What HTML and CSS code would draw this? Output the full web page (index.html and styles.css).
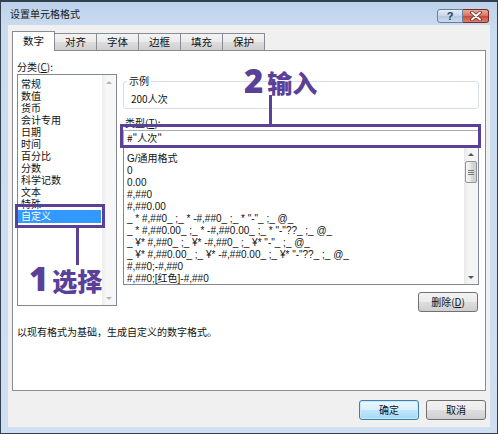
FILE: index.html
```html
<!DOCTYPE html>
<html lang="zh-CN">
<head>
<meta charset="utf-8">
<title>设置单元格格式</title>
<link rel="stylesheet" href="styles.css">
</head>
<body>
<div class="window">
  <div class="titlebar">
    <span class="title">设置单元格格式</span>
    <div class="caption">
      <span class="cap-btn help">?</span>
      <span class="cap-btn close"><svg width="12" height="10" viewBox="0 0 12 10"><path d="M2 1.5 L10 8.5 M10 1.5 L2 8.5" stroke="#6b2a22" stroke-width="3.6" stroke-linecap="round"/><path d="M2 1.5 L10 8.5 M10 1.5 L2 8.5" stroke="#fff" stroke-width="2" stroke-linecap="round"/></svg></span>
    </div>
  </div>
  <div class="client">
    <div class="tabs">
      <span class="tab active">数字</span>
      <span class="tab">对齐</span>
      <span class="tab">字体</span>
      <span class="tab">边框</span>
      <span class="tab">填充</span>
      <span class="tab">保护</span>
    </div>
    <div class="panel">
      <div class="panel-grid">
        <div class="cat-label">分类(<u>C</u>):</div>
        <div class="listbox cat-list">
          <ul class="items">
            <li>常规</li>
            <li>数值</li>
            <li>货币</li>
            <li>会计专用</li>
            <li>日期</li>
            <li>时间</li>
            <li>百分比</li>
            <li>分数</li>
            <li>科学记数</li>
            <li>文本</li>
            <li>特殊</li>
            <li class="selected">自定义</li>
          </ul>
          <div class="vscroll disabled">
            <span class="arrow up"></span>
            <span class="track"></span>
            <span class="arrow down"></span>
          </div>
        </div>
        <div class="right-col">
          <div class="sample">
            <div class="sample-legend">示例</div>
            <div class="sample-value">200人次</div>
          </div>
          <div class="type-label">类型(<u>T</u>):</div>
          <div class="type-input">#"人次"</div>
          <div class="listbox fmt-list">
            <ul class="items">
              <li>G/通用格式</li>
              <li>0</li>
              <li>0.00</li>
              <li>#,##0</li>
              <li>#,##0.00</li>
              <li>_ * #,##0_ ;_ * -#,##0_ ;_ * "-"_ ;_ @_</li>
              <li>_ * #,##0.00_ ;_ * -#,##0.00_ ;_ * "-"??_ ;_ @_</li>
              <li>_ ¥* #,##0_ ;_ ¥* -#,##0_ ;_ ¥* "-"_ ;_ @_</li>
              <li>_ ¥* #,##0.00_ ;_ ¥* -#,##0.00_ ;_ ¥* "-"??_ ;_ @_</li>
              <li>#,##0;-#,##0</li>
              <li>#,##0;[红色]-#,##0</li>
            </ul>
            <div class="vscroll">
              <span class="arrow up"></span>
              <span class="track"><span class="thumb"><span class="grip"></span></span></span>
              <span class="arrow down"></span>
            </div>
          </div>
          <div class="del-row"><button class="btn">删除(<u>D</u>)</button></div>
        </div>
      </div>
      <p class="desc">以现有格式为基础，生成自定义的数字格式。</p>
    </div>
    <div class="footer">
      <button class="btn default">确定</button>
      <button class="btn">取消</button>
    </div>
  </div>

  <div class="anno box1"></div>
  <div class="anno line1"></div>
  <div class="anno label1"><span class="num">1</span>选择</div>
  <div class="anno box2"></div>
  <div class="anno line2"></div>
  <div class="anno label2"><span class="num">2</span>输入</div>
</div>
</body>
</html>
```

FILE: styles.css
```css
* { box-sizing: border-box; }
html, body { margin: 0; padding: 0; }
body {
  width: 498px;
  height: 434px;
  overflow: hidden;
  background: #fff;
  font-family: "Noto Sans CJK SC", "Noto Sans", sans-serif;
  font-size: 10px;
  color: #111;
}
u { text-decoration: underline; }

.window {
  position: relative;
  width: 498px;
  height: 434px;
  border: 1px solid #33404f;
  border-top-width: 2px;
  background: linear-gradient(to bottom, #bcd1ea 0, #c9dbef 24px, #cfdff1 100%);
  padding: 0 7px 6px 7px;
  display: flex;
  flex-direction: column;
}

.titlebar {
  height: 23px;
  display: flex;
  align-items: center;
  justify-content: space-between;
  padding: 0 0 0 2px;
}
.title { font-size: 10px; line-height: 12px; color: #1a1a1a; margin-top: 1px; }
.caption { display: flex; align-self: flex-start; margin-top: 7px; margin-right: 1px; }
.cap-btn {
  width: 26px;
  height: 14px;
  display: flex;
  align-items: center;
  justify-content: center;
  border: 1px solid #6c7f98;
}
.cap-btn.help {
  background: linear-gradient(to bottom, #e6eef8, #c5d5ea 50%, #b5c8e2 51%, #cbdaee);
  border-radius: 3px 0 0 3px;
  font-family: "Liberation Sans", sans-serif;
  font-weight: bold;
  font-size: 11px;
  color: #2a3b55;
  line-height: 12px;
}
.cap-btn.close {
  background: linear-gradient(to bottom, #eaa99c, #d9705e 50%, #c7493a 51%, #d98070);
  border-left: none;
  border-color: #7a2c22;
  border-radius: 0 3px 3px 0;
}

.client {
  flex: 1;
  background: #f0f0f0;
  padding: 6px 4px 0 4px;
  display: flex;
  flex-direction: column;
}

.tabs {
  display: flex;
  align-items: flex-end;
  height: 19px;
}
.tab {
  width: 43px;
  height: 17px;
  border: 1px solid #898c95;
  border-bottom: none;
  margin-right: -1px;
  background: linear-gradient(to bottom, #f3f3f3, #ebebeb 50%, #dddddd 51%, #cfcfcf);
  display: flex;
  align-items: center;
  justify-content: center;
  font-size: 10.5px;
  line-height: 12px;
}
.tab.active {
  height: 20px;
  margin-bottom: -1px;
  background: #fff;
  position: relative;
  z-index: 1;
  padding-bottom: 2px;
}

.panel {
  height: 341px;
  background: #fff;
  border: 1px solid #898c95;
  padding: 8px 4px 0 4px;
}
.panel-grid {
  display: grid;
  grid-template-columns: 100px 356px;
  grid-template-rows: 15px auto;
  grid-template-areas: "lab ." "list right";
  column-gap: 6px;
}
.cat-label { grid-area: lab; line-height: 15px; }

.listbox {
  border: 1px solid #828790;
  background: #fff;
  display: flex;
}
.items {
  list-style: none;
  margin: 0;
  padding: 4px 0 0 0;
  flex: 1;
  min-width: 0;
  font-family: "Liberation Sans", "Noto Sans CJK SC", sans-serif;
}
.items li {
  line-height: 12px;
  height: 12px;
  padding-left: 2px;
  white-space: nowrap;
}
.cat-list { grid-area: list; height: 232px; }
.cat-list li { padding-left: 3px; }
.cat-list li.selected {
  background: #3399ff;
  color: #fff;
  height: 13px;
  line-height: 13px;
  margin-top: -1px;
  margin-right: 1px;
}

.vscroll {
  width: 14px;
  display: flex;
  flex-direction: column;
  background: linear-gradient(to right, #e8e8e8, #f4f4f4 30%, #f4f4f4);
}
.vscroll.disabled { background: linear-gradient(to right, #ececec, #f7f7f7 30%, #f7f7f7); }
.vscroll .arrow {
  height: 14px;
  display: flex;
  align-items: center;
  justify-content: center;
}
.vscroll .arrow::before {
  content: "";
  width: 0;
  height: 0;
  border-left: 3px solid transparent;
  border-right: 3px solid transparent;
}
.vscroll .arrow.up::before { border-bottom: 3px solid #555; }
.vscroll .arrow.down::before { border-top: 3px solid #555; }
.vscroll.disabled .arrow.up::before { border-bottom-color: #b5b5b5; }
.vscroll.disabled .arrow.down::before { border-top-color: #b5b5b5; }
.vscroll .track { flex: 1; padding: 0 1px; }
.thumb {
  display: flex;
  align-items: center;
  justify-content: center;
  height: 22px;
  border: 1px solid #959595;
  border-radius: 2px;
  background: linear-gradient(to right, #f3f3f3, #e8e8e8 50%, #d9d9d9 51%, #d0d0d0);
}
.grip {
  width: 6px;
  height: 5px;
  border-top: 1px solid #7a7a7a;
  border-bottom: 1px solid #7a7a7a;
}
.grip::after {
  content: "";
  display: block;
  margin-top: 1px;
  height: 1px;
  background: #7a7a7a;
}

.right-col {
  grid-area: right;
  display: flex;
  flex-direction: column;
}
.sample {
  margin-top: 7px;
  border: 1px solid #d5dfe5;
  border-radius: 3px;
  padding: 0 7px 2px 7px;
}
.sample-legend {
  width: fit-content;
  margin: -8px 0 0 -4px;
  padding: 0 2px;
  background: #fff;
  line-height: 14px;
}
.sample-value { margin-top: 4px; line-height: 14px; }
.type-label { margin-top: 7px; line-height: 14px; padding-left: 2px; }
.type-input {
  height: 16px;
  border: 1px solid #abadb3;
  border-bottom-color: #e3e9ef;
  background: #fff;
  line-height: 14px;
  padding-left: 3px;
}
.fmt-list { height: 139px; border-top-color: #fff; }
.fmt-list .items { padding-top: 6px; padding-left: 1px; }

.del-row { margin-top: 7px; display: flex; justify-content: flex-end; padding-right: 1px; }

.btn {
  font-family: inherit;
  font-size: 10px;
  color: #111;
  width: 60px;
  height: 20px;
  padding: 0;
  border: 1px solid #707070;
  border-radius: 3px;
  background: linear-gradient(to bottom, #f2f2f2, #ebebeb 50%, #dddddd 51%, #cfcfcf);
  line-height: 16px;
}
.btn.default {
  border-color: #3c7fb1;
  box-shadow: inset 0 0 0 1px #cbe6f7;
  background: linear-gradient(to bottom, #eaf6fd, #d9f0fc 50%, #bee6fd 51%, #a7d9f5);
}

.desc {
  margin: 13px 0 0 0;
  line-height: 14px;
}

.footer {
  margin-top: 9px;
  display: flex;
  justify-content: flex-end;
  gap: 7px;
}

/* annotations overlay */
.anno { position: absolute; }
.box1 {
  left: 14px; top: 202px;
  width: 90px; height: 24px;
  border: 3px solid #5a4098;
}
.line1 {
  left: 75px; top: 225px;
  width: 3px; height: 38px;
  background: #5a4098;
}
.label1, .label2 {
  color: #5a4098;
  font-weight: 900;
  font-size: 25px;
  line-height: 30px;
  display: flex;
  align-items: baseline;
  white-space: nowrap;
}
.label1 { left: 28px; top: 262px; }
.label2 { left: 243px; top: 64px; }
.num {
  font-family: "Noto Sans", sans-serif;
  font-weight: 900;
  font-size: 33px;
  margin-right: 4px;
}
.box2 {
  left: 119px; top: 122px;
  width: 361px; height: 24px;
  border: 3px solid #5a4098;
}
.line2 {
  left: 268px; top: 93px;
  width: 3px; height: 30px;
  background: #5a4098;
}
```
